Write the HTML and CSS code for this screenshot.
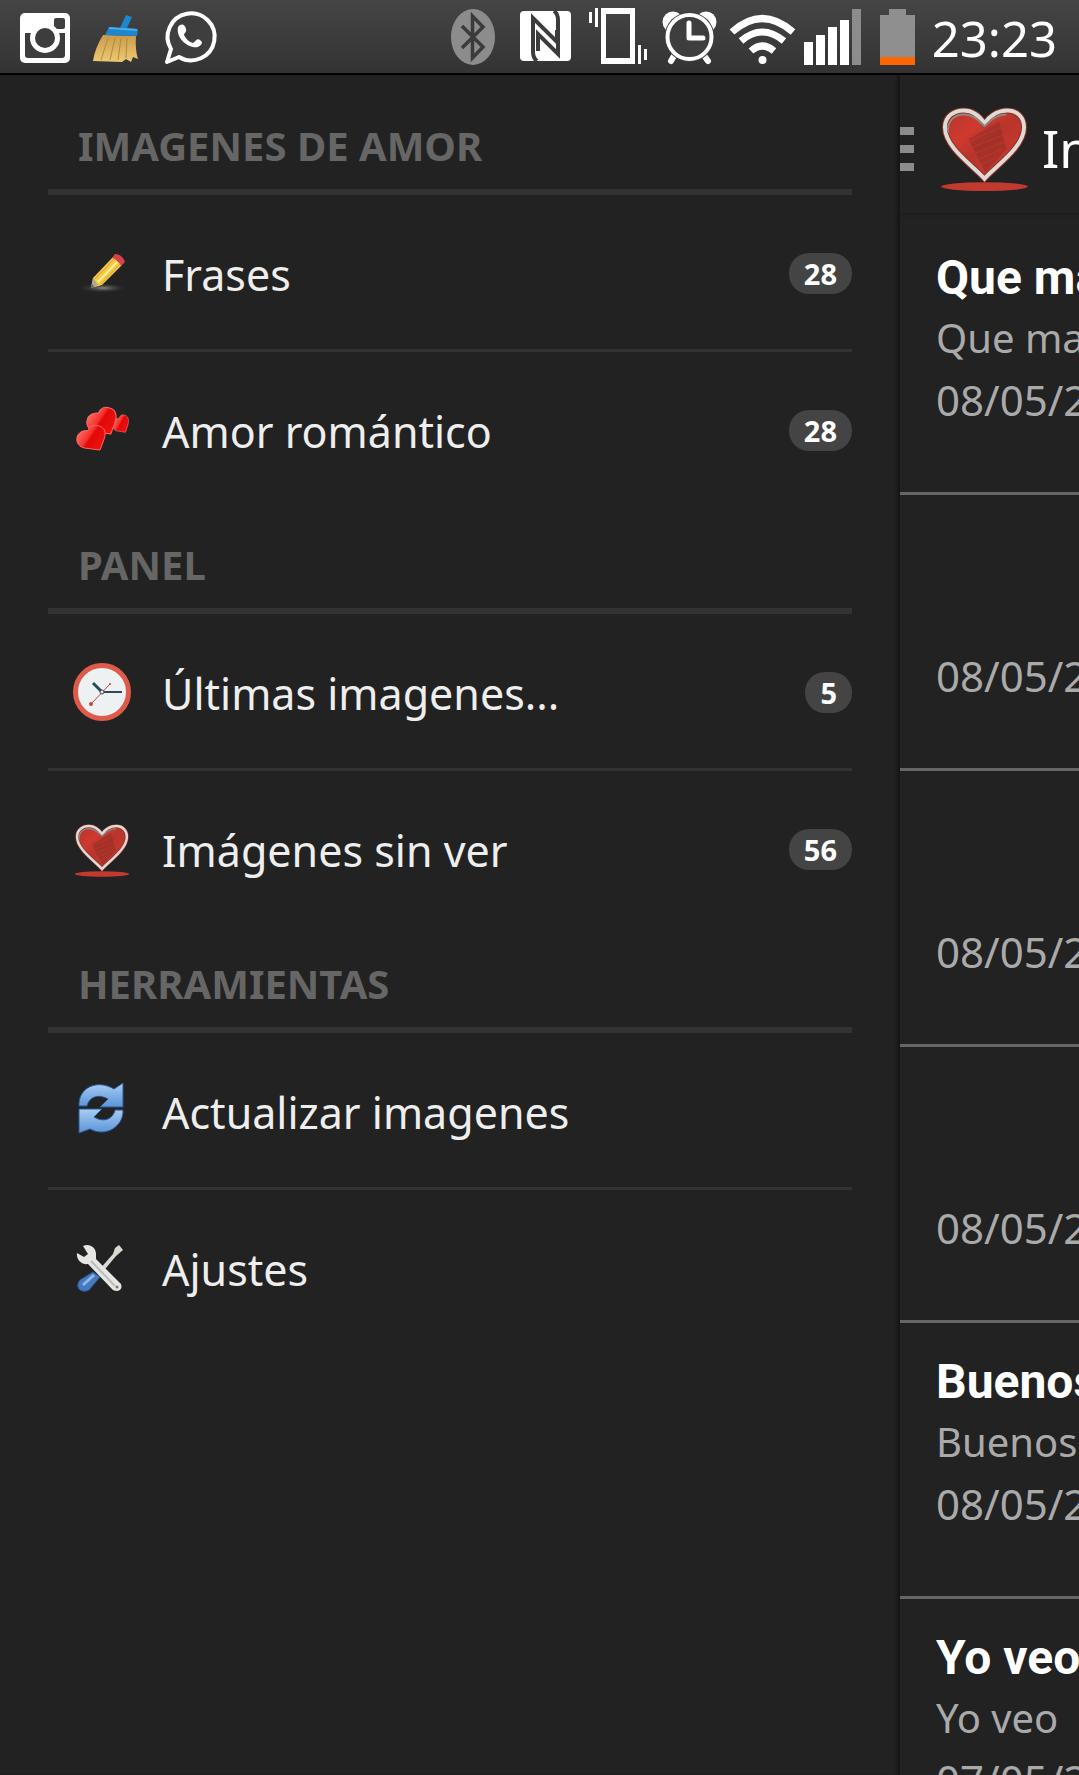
FILE: index.html
```html
<!DOCTYPE html>
<html lang="es">
<head>
<meta charset="utf-8">
<meta name="viewport" content="width=device-width, initial-scale=1">
<title>Imagenes de amor</title>
<link rel="stylesheet" href="styles.css">
</head>
<body>
<svg width="0" height="0" class="defs" aria-hidden="true">
  <defs>
    <linearGradient id="heartFill" x1="0" y1="0" x2="1" y2="1">
      <stop offset="0" stop-color="#b3332a"/><stop offset=".3" stop-color="#cf3a2e"/><stop offset=".5" stop-color="#b8352b"/><stop offset="1" stop-color="#cf3d31"/>
    </linearGradient>
    <linearGradient id="gloss" x1="0" y1="0" x2="1" y2=".6">
      <stop offset="0" stop-color="#ff8a80"/><stop offset=".5" stop-color="#f8332e"/><stop offset=".6" stop-color="#e00808"/><stop offset="1" stop-color="#f01010"/>
    </linearGradient>
    <linearGradient id="blue" x1="0" y1="0" x2="0" y2="1">
      <stop offset="0" stop-color="#a9cdf3"/><stop offset="1" stop-color="#5a94d8"/>
    </linearGradient>
    <linearGradient id="straw" x1="0" y1="0" x2="0" y2="1">
      <stop offset="0" stop-color="#c99b4c"/><stop offset="1" stop-color="#edca72"/>
    </linearGradient>
    <radialGradient id="glow">
      <stop offset="0" stop-color="#8a8a84"/><stop offset="1" stop-color="#222" stop-opacity="0"/>
    </radialGradient>
    <symbol id="heart" viewBox="0 0 90 86">
      <path d="M45 72C35 60 5 41 5 20C5 9 14 3 24 3C34 3 41 10 45 16C49 10 57 3 68 3C78 3 85 10 85 20C85 41 55 60 45 72Z" fill="url(#heartFill)" stroke="#8c2f29" stroke-width="6"/>
      <path d="M45 72C35 60 5 41 5 20C5 9 14 3 24 3C34 3 41 10 45 16C49 10 57 3 68 3C78 3 85 10 85 20C85 41 55 60 45 72Z" fill="none" stroke="#dedad6" stroke-width="4"/>
      <path d="M8 26C7 12 16 7 24 7C34 7 40 14 45 19C50 14 57 7 67 7" fill="none" stroke="#8f8782" stroke-width="2"/>
      <path d="M29 32L60 14L67 42L46 66Z" fill="#8e2c25" opacity=".5"/>
      <path d="M30 34L62 20M33 40L66 27M36 46L67 34M39 52L64 42M42 58L58 50" stroke="#c43a2f" stroke-width="1" opacity=".7"/>
      <ellipse cx="45" cy="80" rx="44" ry="4.5" fill="#c23a2e"/>
    </symbol>
    <symbol id="gem" viewBox="0 0 30 28" preserveAspectRatio="none">
      <path d="M24 27L9 25C3 24 0 19 1 14C2 9 7 6 12 7C14 2 18 0 23 2C30 4 30 11 28 16Z" fill="url(#gloss)" stroke="#ff6c64" stroke-width="1"/>
    </symbol>
  </defs>
</svg>

<header class="status">
  <div class="status-group">
    <svg width="60" height="73" viewBox="15 0 60 73" role="img" aria-label="Instagram">
      <rect x="20" y="13" width="50" height="50" rx="5" fill="#fff"/>
      <rect x="54" y="18" width="11" height="11" rx="2" fill="#404040"/>
      <path d="M25 33H32V36A13.500 13.500 0 0 0 58 36V33H65V55Q65 58 62 58H28Q25 58 25 55Z" fill="#3c3c3c"/>
      <circle cx="45" cy="38" r="15" fill="#fff"/><circle cx="45" cy="38" r="10" fill="#3d3d3d"/>
    </svg>
    <svg width="80" height="73" viewBox="75 0 80 73" role="img" aria-label="Limpieza">
      <path d="M103 35L136 36Q135 50 138 59L133 57L131 62L126 59L122 62L93 61Q95 48 103 35Z" fill="url(#straw)"/>
      <path d="M108 38L101 60M115 38L110 60M121 38L118 60M127 38L126 58" stroke="#b3893f" stroke-width="1" fill="none"/>
      <path d="M105 35L109 27L120 28L126 15L132 17L127 28L138 29L137 36Z" fill="#1c86cf"/>
      <path d="M109 28L137 30" stroke="#3fb0ee" stroke-width="2"/>
    </svg>
    <svg width="70" height="73" viewBox="155 0 70 73" role="img" aria-label="WhatsApp">
      <path d="M167 62L171 49A23.500 23.500 0 1 1 179 57Z" fill="#3e3e3e" stroke="#fff" stroke-width="4" stroke-linejoin="round"/>
      <path d="M178 27C181 23 185 24 186 29C187 32 184 33 184 35C186 39 189 42 193 43C196 41 197 38 200 40L202 42C202 46 197 48 193 47C184 45 176 36 178 27Z" fill="#fff"/>
    </svg>
  </div>
  <div class="status-group">
    <svg width="62" height="73" viewBox="446 0 62 73" role="img" aria-label="Bluetooth">
      <ellipse cx="473" cy="37" rx="22" ry="28" fill="#8c8c8c"/>
      <path d="M462 26L483 47L472.500 58V16L483 27L462 48" fill="none" stroke="#3b3b3b" stroke-width="3.500"/>
    </svg>
    <svg width="72" height="73" viewBox="508 0 72 73" role="img" aria-label="NFC">
      <rect x="520" y="11" width="51" height="50" rx="4" fill="#fff"/>
      <path d="M537 61Q533 58 533 52V18L557 42V30M554 11Q558 14 558 20V54L538 34V51" fill="none" stroke="#3c3c3c" stroke-width="4"/>
    </svg>
    <svg width="74" height="73" viewBox="580 0 74 73" role="img" aria-label="Vibración">
      <path d="M601 8H635V64H601ZM606 14V58H630V14ZM589 12H592V23H589ZM595 8H598V27H595ZM638 45H641V64H638ZM644 49H647V60H644Z" fill="#fff" fill-rule="evenodd"/>
    </svg>
    <svg width="70" height="73" viewBox="654 0 70 73" role="img" aria-label="Alarma">
      <circle cx="673" cy="22" r="10.500" fill="#fff"/><circle cx="706" cy="22" r="10.500" fill="#fff"/>
      <path d="M675 54L671 61M703 54L708 61" stroke="#fff" stroke-width="6" stroke-linecap="round"/>
      <circle cx="689.500" cy="37" r="25" fill="#3e3e3e"/>
      <circle cx="689.500" cy="37" r="22" fill="#3e3e3e" stroke="#fff" stroke-width="4"/>
      <path d="M689 23V38H703" fill="none" stroke="#fff" stroke-width="5" stroke-linecap="round" stroke-linejoin="round"/>
    </svg>
    <svg width="76" height="73" viewBox="724 0 76 73" role="img" aria-label="Wi-Fi">
      <path d="M732 32Q762 5 793 32M741 41Q762 23 784 41M751 51Q762 41 774 51" fill="none" stroke="#fff" stroke-width="7"/>
      <circle cx="762.500" cy="60" r="4" fill="#fff"/>
    </svg>
    <svg width="70" height="73" viewBox="800 0 70 73" role="img" aria-label="Señal">
      <path d="M804 42H813V65H804ZM816 35H825V65H816ZM828 27H837V65H828ZM840 20H849V65H840Z" fill="#fff"/>
      <path d="M852 9H861V65H852Z" fill="#8c8c8c"/>
    </svg>
    <svg width="62" height="73" viewBox="870 0 62 73" role="img" aria-label="Batería">
      <path d="M889 9H906V15H915V57H880V15H889Z" fill="#8f8f8f"/><path d="M880 57H915V65H880Z" fill="#ff6600"/>
    </svg>
    <time class="clock">23:23</time>
  </div>
</header>

<div class="screen">
  <nav class="drawer" aria-label="Menú">
    <section>
      <h2>IMAGENES DE AMOR</h2>
      <ul>
        <li><a href="#frases">
          <svg class="icon" viewBox="0 0 60 60" aria-hidden="true">
            <ellipse cx="31" cy="46" rx="25" ry="5" fill="url(#glow)"/>
            <path d="M19 46L21 36L41 15L50 23L30 43Z" fill="#f6c944"/>
            <path d="M26 40L45 20" stroke="#fff0a0" stroke-width="2"/><path d="M23 37L42 17M29 42L48 22" stroke="#dfa02d" stroke-width="1"/>
            <path d="M40 16L43 12Q50 12 53 20L49 24Q46 17 40 16Z" fill="#d94049"/>
            <path d="M19 46L21 36L26 43Z" fill="#aaa79c"/><path d="M19 46L20 42L22 45Z" fill="#555"/>
          </svg>
          <span class="label">Frases</span><span class="badge">28</span></a></li>
        <li><a href="#amor">
          <svg class="icon" viewBox="0 0 60 60" aria-hidden="true">
            <use href="#gem" x="40" y="15" width="17" height="19"/>
            <use href="#gem" x="14" y="7" width="31" height="29"/>
            <use href="#gem" x="4" y="25" width="30" height="27"/>
          </svg>
          <span class="label">Amor romántico</span><span class="badge">28</span></a></li>
      </ul>
    </section>
    <section>
      <h2>PANEL</h2>
      <ul>
        <li><a href="#ultimas">
          <svg class="icon" viewBox="0 0 60 60" aria-hidden="true">
            <circle cx="30" cy="31" r="26.500" fill="#eef1f1" stroke="#df5b49" stroke-width="5"/>
            <path d="M21 22L30 31" stroke="#2c4a5a" stroke-width="3"/><path d="M30 31H50" stroke="#2c4a5a" stroke-width="2"/>
            <path d="M38 23L19 43" stroke="#c4493c" stroke-width="1"/><circle cx="19" cy="43" r="2" fill="#c4493c"/><circle cx="38" cy="23" r="1" fill="#c4493c"/>
            <circle cx="30" cy="31" r="2" fill="#eee" stroke="#2c4a5a"/>
          </svg>
          <span class="label">Últimas imagenes...</span><span class="badge">5</span></a></li>
        <li><a href="#sinver">
          <svg class="icon" viewBox="0 0 60 60" aria-hidden="true"><use href="#heart" x="2" y="6" width="56" height="54"/></svg>
          <span class="label">Imágenes sin ver</span><span class="badge">56</span></a></li>
      </ul>
    </section>
    <section>
      <h2>HERRAMIENTAS</h2>
      <ul>
        <li><a href="#actualizar">
          <svg class="icon" viewBox="0 0 60 60" aria-hidden="true">
            <g stroke="#2b5792" stroke-width="1">
              <path d="M7 26C6 7 26 -1 42 9L51 3V27H28L36 19C25 13 17 18 15 26Z" fill="url(#blue)"/>
              <path d="M51 30C52 46 34 58 18 49L7 53V29H30L22 37C32 43 41 39 43 30Z" fill="url(#blue)"/>
            </g>
          </svg>
          <span class="label">Actualizar imagenes</span></a></li>
        <li><a href="#ajustes">
          <svg class="icon" viewBox="0 0 60 60" aria-hidden="true">
            <path d="M26 34L41 17L43 11L47 8L51 13L44 19L29 37Z" fill="#d9d9d4"/>
            <path d="M21 35L28 40L17 53Q11 56 7 52Q4 48 8 43Z" fill="#4679bd" stroke="#2b5792"/>
            <path d="M11 48L22 38" stroke="#8db8ea" stroke-width="3"/>
            <path d="M11 9C17 6 25 10 24 19V22L49 47Q51 53 45 54Q41 54 39 51L16 27C10 28 4 23 5 16L12 20L16 17Z" fill="#e6e6e2"/>
            <path d="M19 24L43 49" stroke="#bdbdb8" stroke-width="2"/><circle cx="45" cy="50" r="1.500" fill="#777"/>
          </svg>
          <span class="label">Ajustes</span></a></li>
      </ul>
    </section>
  </nav>

  <main class="content">
    <div class="appbar">
      <button class="menu" aria-label="Cerrar menú"><i></i><i></i><i></i></button>
      <svg class="logo" viewBox="0 0 90 86" aria-hidden="true"><use href="#heart" width="90" height="86"/></svg>
      <h1>In</h1>
    </div>
    <article><h3>Que ma</h3><p>Que ma</p><time>08/05/2</time></article>
    <article><time>08/05/2</time></article>
    <article><time>08/05/2</time></article>
    <article><time>08/05/2</time></article>
    <article><h3>Buenos</h3><p>Buenos</p><time>08/05/2</time></article>
    <article><h3>Yo veo</h3><p>Yo veo</p><time>07/05/2</time></article>
  </main>
</div>
</body>
</html>
```

FILE: styles.css
```css
* { box-sizing: border-box; }

body {
  margin: 0;
  height: 100vh;
  overflow: hidden;
  display: flex;
  flex-direction: column;
  background: #222;
  color: #eee;
  font-family: "Noto Sans", "Open Sans", sans-serif;
}

.defs { position: absolute; }
h1, h2, h3, p, ul { margin: 0; padding: 0; }
ul { list-style: none; }

.status {
  flex: none;
  display: flex;
  justify-content: space-between;
  height: 75px;
  padding: 0 22px 0 15px;
  background: linear-gradient(#454545, #333);
  border-bottom: 2px solid #000;
}
.status-group { display: flex; }
.status-group svg { display: block; }
.clock { color: #fff; font-size: 49px; line-height: 76px; }

.screen {
  flex: 1;
  min-height: 0;
  display: grid;
  grid-template-columns: minmax(0, 1fr) 179px;
}

.drawer {
  padding: 12px 48px 0;
  box-shadow: inset -4px 0 3px -1px #151515;
}
.drawer h2 {
  height: 108px;
  padding-left: 30px;
  border-bottom: 6px solid #333;
  color: #666;
  font-size: 40px;
  line-height: 118px;
  font-weight: 700;
}
.drawer li + li { border-top: 3px solid #333; }
.drawer a {
  display: flex;
  align-items: center;
  height: 154px;
  padding-left: 24px;
  color: #eee;
  text-decoration: none;
}
.icon { flex: none; width: 60px; height: 60px; margin-right: 30px; }
.label { flex: 1; font-size: 43px; line-height: 60px; padding-top: 6px; }
.badge {
  margin-top: 2px;
  padding: 0 15px;
  border-radius: 20px;
  background: #444;
  color: #fff;
  font-size: 29px;
  font-weight: 700;
  line-height: 41px;
}

.content { min-width: 0; overflow: hidden; }
.appbar {
  display: flex;
  align-items: center;
  height: 144px;
  padding-bottom: 6px;
  background: linear-gradient(#222 138px, #1e1e1e 138px, #222);
}
.menu {
  flex: none;
  display: grid;
  gap: 10px;
  width: 14px;
  margin: 10px 26px 0 0;
  padding: 0;
  border: 0;
  background: none;
}
.menu i { height: 8px; background: #8c8c8c; }
.logo { flex: none; width: 89px; height: 86px; margin: 12px 13px 0 0; }
h1 { padding-top: 8px; color: #fff; font-size: 51px; line-height: 64px; font-weight: 400; }

article {
  display: flex;
  flex-direction: column;
  justify-content: flex-end;
  height: 276px;
  padding: 0 0 60px 36px;
  border-bottom: 3px solid #666;
  color: #aaa;
  white-space: nowrap;
}
article h3 {
  color: #fff;
  font-family: Roboto, "Noto Sans", sans-serif;
  font-size: 48px;
  line-height: 60px;
}
article p { font-size: 40px; line-height: 60px; }
article time { font-size: 42px; line-height: 64px; }
```
